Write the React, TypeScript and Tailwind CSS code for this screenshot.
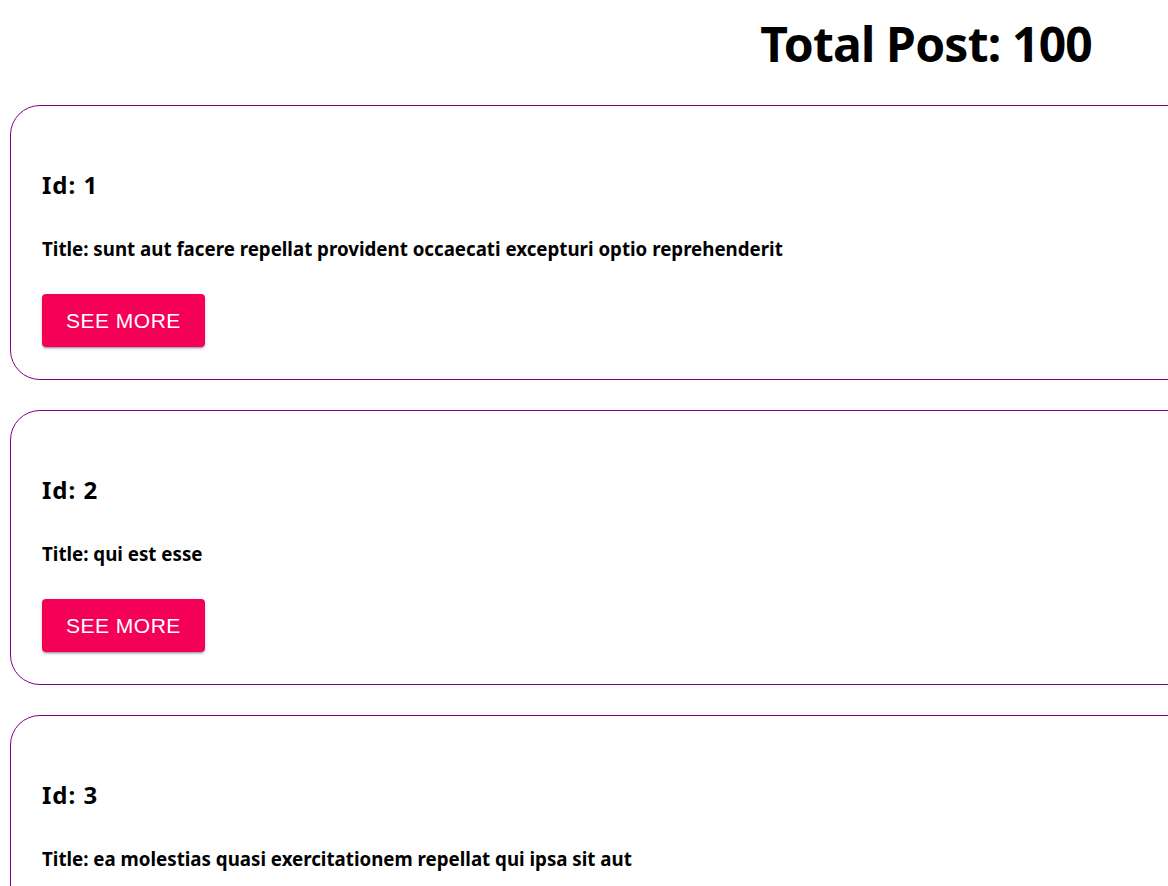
const posts = [
  { id: 1, title: "sunt aut facere repellat provident occaecati excepturi optio reprehenderit" },
  { id: 2, title: "qui est esse" },
  { id: 3, title: "ea molestias quasi exercitationem repellat qui ipsa sit aut" },
];

const font = "font-['Segoe_UI','Noto_Sans',sans-serif]";

const PostCard = ({ id, title }: { id: number; title: string }) => (
  <div className="w-[1200px] ml-[10px] mb-[30px] border border-[#800080] rounded-[30px] pl-[31px] pt-[63px] pb-[32px] bg-white">
    <h2 className={`${font} text-[24px] leading-[32px] tracking-[1px] font-bold text-black`}>Id: {id}</h2>
    <h3 className={`${font} mt-[36px] text-[18.72px] leading-[24px] font-bold text-black`}>Title: {title}</h3>
    <button
      type="button"
      className="mt-[33px] h-[53px] px-[24px] rounded-[4px] bg-[#f50057] text-white uppercase font-['Liberation_Sans',Arial,sans-serif] text-[21px] tracking-[0.5px] shadow-[0px_3px_1px_-2px_rgba(0,0,0,0.2),0px_2px_2px_0px_rgba(0,0,0,0.14),0px_1px_5px_0px_rgba(0,0,0,0.12)]"
    >
      See More
    </button>
  </div>
);

const App = () => {
  return (
    <div className="w-full min-h-screen overflow-hidden bg-white">
      <h1 className={`${font} pt-[16px] pb-[33px] pr-[76px] text-right text-[48px] leading-[56px] tracking-[-0.8px] font-bold text-black`}>
        Total Post: 100
      </h1>
      {posts.map((post) => (
        <PostCard key={post.id} id={post.id} title={post.title} />
      ))}
    </div>
  );
};

export default App;
